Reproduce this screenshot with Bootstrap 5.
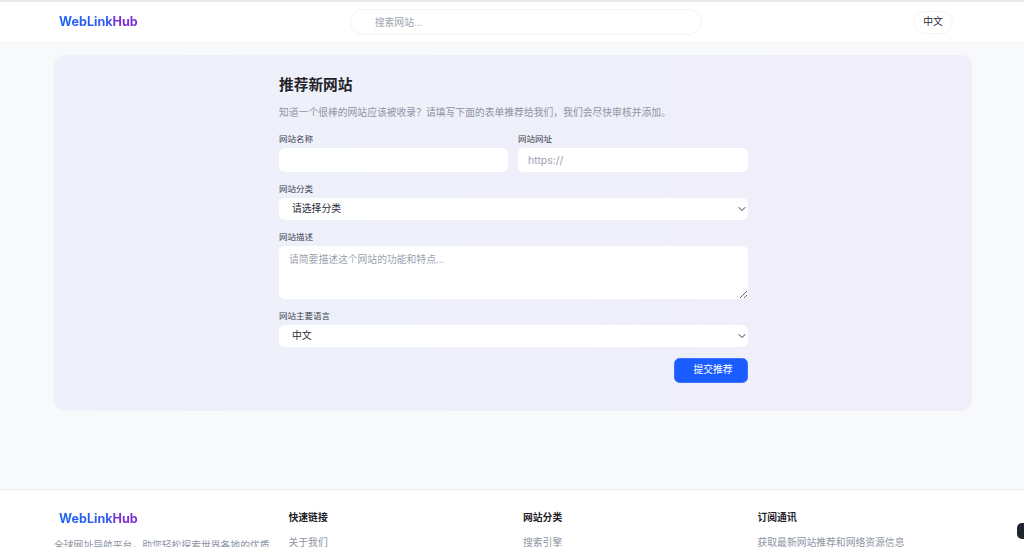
<!DOCTYPE html>
<html lang="zh-CN">
<head>
<meta charset="utf-8">
<title>WebLinkHub</title>
<link href="https://cdn.jsdelivr.net/npm/bootstrap@5.3.0/dist/css/bootstrap.min.css" rel="stylesheet">
<style>
html,body{height:547px;overflow:hidden}
body{background:#f8f9fb;font-family:Inter,"Noto Sans CJK SC",sans-serif;font-size:9.8px;color:#1f2937}
.top-bar{height:43px;background:#fff;border-top:2px solid #e8e8e8;border-bottom:1px solid #f0f1f4;padding:0 71px 0 59px}
.brand-text{font-weight:700;font-size:12.6px;line-height:18px;background:linear-gradient(90deg,#1d63f5 0,#2f5cf0 62%,#7c2fd6 72%,#7c2fd6 100%);-webkit-background-clip:text;background-clip:text;color:transparent;text-decoration:none;display:inline-block}
.search-box{width:352px;height:26px;margin-left:212px;border:1px solid #f3f4f6;border-radius:13px;background:#fff;padding:0 24px;font-size:9.8px}
.search-box::placeholder{color:#9ca3af}
.lang-btn{width:40px;height:23px;border:1px solid #f3f4f6;border-radius:12px;background:#fff;font-size:9.8px;color:#1f2937;padding:0}
.panel-wrap{margin:12px 52px 0 54px}
.form-panel{height:356px;border-radius:11px;background:linear-gradient(90deg,#edf1fa 0,#f0eef9 100%);padding:21px 0 0 225px}
.form-inner{width:469px}
.form-title{font-size:14.7px;font-weight:700;line-height:18px;margin:0 0 12px;color:#1f2329}
.form-sub{font-size:9.8px;line-height:14px;color:#8e95a3;margin:0 0 13px}
.field-label{display:block;font-size:8.5px;line-height:12px;margin:0 0 3px;color:#3a4150;font-weight:400}
.form-control.field-in,.form-select.field-in{font-size:9.8px;border:0;border-radius:5.6px;background-color:#fff;color:#1f2937;box-shadow:none}
.form-control.field-in{padding:0 10px}
.form-control.field-in::placeholder{color:#9ca3af}
.form-control.url-in::placeholder{font-size:10.5px}
.form-select.field-in{padding:1px 24px 0 13px;background-position:right 2px center;background-size:8px 8px}
.h-24{height:24px}
.h-23{height:22px;min-height:0}
.area-in{height:53px;padding-top:7px!important;display:block}
.two-col{display:grid;grid-template-columns:229px 230px;gap:10px}
.mb-f{margin-bottom:11px}
.send-btn{width:74px;height:25px;border-radius:5.6px;background:#1a5cff;border:1px solid #3a74ff;color:#fff;font-size:9.8px;padding:0 0 0 4px;margin-top:11px}
.site-foot{position:relative;margin-top:78px;background:#fff;border-top:1px solid #eceef2;height:60px;padding:21px 0 0 54px}
.foot-grid{display:grid;grid-template-columns:repeat(4,234.5px)}
.foot-logo{padding-left:5px;margin:-1px 0 11px}
.foot-h{font-size:9.8px;font-weight:700;line-height:14px;margin:0 0 11px;color:#1f2329}
.foot-t{font-size:9.8px;line-height:14px;color:#8e95a3;margin:0;text-decoration:none;display:block}
.foot-first{width:216px}
.float-pill{position:fixed;right:0;top:523px;width:7px;height:16px;background:#1f2430;border-radius:5px 0 0 5px}
</style>
</head>
<body>
<header class="top-bar d-flex align-items-center justify-content-between">
  <div class="d-flex align-items-center">
    <a class="brand-text" href="#">WebLinkHub</a>
    <input class="search-box" type="text" placeholder="搜索网站...">
  </div>
  <button class="lang-btn" type="button">中文</button>
</header>
<main class="panel-wrap">
  <section class="form-panel">
    <form class="form-inner">
      <h1 class="form-title">推荐新网站</h1>
      <p class="form-sub">知道一个很棒的网站应该被收录？请填写下面的表单推荐给我们，我们会尽快审核并添加。</p>
      <div class="two-col mb-f">
        <div><label class="field-label">网站名称</label><input class="form-control field-in h-24" type="text"></div>
        <div><label class="field-label">网站网址</label><input class="form-control field-in url-in h-24" type="text" placeholder="https://"></div>
      </div>
      <div class="mb-f"><label class="field-label">网站分类</label>
        <select class="form-select field-in h-23"><option>请选择分类</option></select></div>
      <div class="mb-f"><label class="field-label">网站描述</label>
        <textarea class="form-control field-in area-in" placeholder="请简要描述这个网站的功能和特点..."></textarea></div>
      <div><label class="field-label">网站主要语言</label>
        <select class="form-select field-in h-23"><option>中文</option></select></div>
      <div class="d-flex justify-content-end"><button class="send-btn" type="button">提交推荐</button></div>
    </form>
  </section>
</main>
<footer class="site-foot">
  <div class="foot-grid">
    <div>
      <div class="foot-logo"><a class="brand-text" href="#">WebLinkHub</a></div>
      <p class="foot-t foot-first">全球网址导航平台，助您轻松探索世界各地的优质网站资源</p>
    </div>
    <div><h2 class="foot-h">快速链接</h2><a class="foot-t" href="#">关于我们</a></div>
    <div><h2 class="foot-h">网站分类</h2><a class="foot-t" href="#">搜索引擎</a></div>
    <div><h2 class="foot-h">订阅通讯</h2><p class="foot-t">获取最新网站推荐和网络资源信息</p></div>
  </div>
  <div class="float-pill"></div>
</footer>
<script src="https://cdn.jsdelivr.net/npm/bootstrap@5.3.0/dist/js/bootstrap.bundle.min.js"></script>
</body>
</html>
